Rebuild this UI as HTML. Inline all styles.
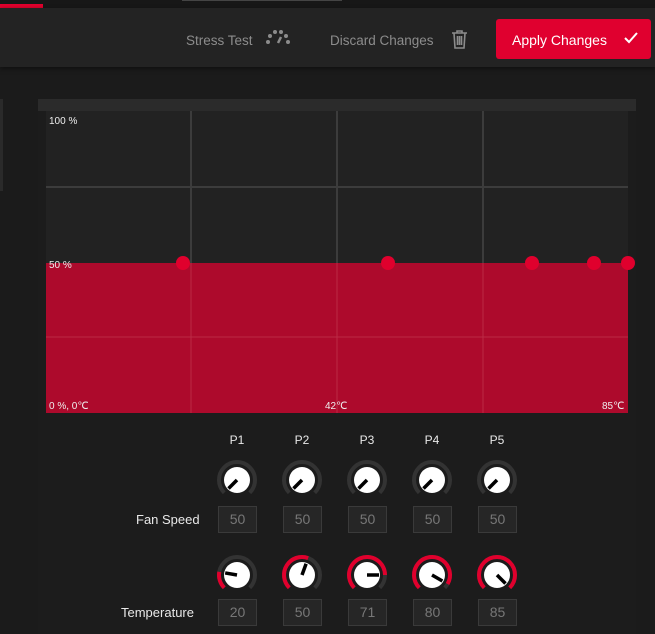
<!DOCTYPE html>
<html><head><meta charset="utf-8"><style>
*{margin:0;padding:0;box-sizing:border-box}
body{width:655px;height:634px;background:#1b1b1b;font-family:"Liberation Sans",sans-serif;position:relative;overflow:hidden}
.a{position:absolute}
.t{color:#8c8c8c;font-size:13.5px}
.box{position:absolute;width:39px;height:27px;border:1px solid #3a3a3a;background:#262626;color:#777;font-size:14px;text-align:center;line-height:25px}
.lbl{position:absolute;color:#e8e8e8;font-size:13px}
.p{position:absolute;color:#e8e8e8;font-size:12px;width:30px;text-align:center}
</style></head><body>
<div class="a" style="left:0;top:0;width:655px;height:8px;background:#171717"></div>
<div class="a" style="left:0;top:4px;width:43px;height:4px;background:#e0002d"></div>
<div class="a" style="left:182px;top:0;width:160px;height:1px;background:#444"></div>
<div class="a" style="left:0;top:8px;width:655px;height:59px;background:#232323;box-shadow:0 2px 4px #111"></div>
<div class="a t" style="left:186px;top:33px">Stress Test</div>
<svg class="a" style="left:264px;top:28px" width="28" height="20" viewBox="0 0 28 20">
<g fill="#8c8c8c"><circle cx="4" cy="14" r="2"/><circle cx="6" cy="8" r="2"/><circle cx="11" cy="4" r="2"/><circle cx="17" cy="4" r="2"/><circle cx="22" cy="8" r="2"/><circle cx="24" cy="14" r="2"/></g>
<line x1="14" y1="15" x2="17" y2="9" stroke="#8c8c8c" stroke-width="2.5"/></svg>
<div class="a t" style="left:330px;top:33px">Discard Changes</div>
<svg class="a" style="left:451px;top:29px" width="17" height="20" viewBox="0 0 17 20" fill="none" stroke="#8c8c8c" stroke-width="1.6">
<path d="M1 4h15M6 4V2h5v2M3 4l1 15h9l1-15M6.5 7v9M8.5 7v9M10.5 7v9"/></svg>
<div class="a" style="left:496px;top:19px;width:155px;height:40px;background:#e0002f;border-radius:3px"></div>
<div class="a" style="left:512px;top:32px;color:#fff;font-size:14px">Apply Changes</div>
<svg class="a" style="left:624px;top:32px" width="14" height="12" viewBox="0 0 14 12"><path d="M1 6l4 4 8-9" fill="none" stroke="#fff" stroke-width="2"/></svg>
<div class="a" style="left:0;top:99px;width:3px;height:92px;background:#2a2a2a"></div>
<div class="a" style="left:38px;top:99px;width:598px;height:535px;background:#1c1c1c"></div>
<div class="a" style="left:38px;top:99px;width:598px;height:12px;background:#2b2b2b"></div>
<svg class="a" style="left:46px;top:111px;overflow:visible" width="582" height="302">
<rect width="582" height="302" fill="#222"/>
<rect y="152" width="582" height="150" fill="#ad0a2c"/>
<g stroke="#3c3c3c" stroke-width="2"><line x1="145" y1="0" x2="145" y2="152"/><line x1="291" y1="0" x2="291" y2="152"/><line x1="437" y1="0" x2="437" y2="152"/><line x1="0" y1="76" x2="582" y2="76"/></g>
<g stroke="#bb2a45" stroke-width="1"><line x1="145" y1="152" x2="145" y2="302"/><line x1="291" y1="152" x2="291" y2="302"/><line x1="437" y1="152" x2="437" y2="302"/><line x1="0" y1="226" x2="582" y2="226"/></g>
<g fill="#e0002d"><circle cx="137" cy="152" r="7"/><circle cx="342" cy="152" r="7"/><circle cx="486" cy="152" r="7"/><circle cx="548" cy="152" r="7"/><circle cx="582" cy="152" r="7"/></g>
<g fill="#eee" font-size="10" font-family="Liberation Sans"><text x="3" y="13">100 %</text><text x="3" y="157">50 %</text><text x="3" y="298">0 %, 0℃</text><text x="279" y="298">42℃</text><text x="556" y="298">85℃</text></g>
</svg>
<div class="p" style="left:222px;top:433px">P1</div><div class="p" style="left:287px;top:433px">P2</div><div class="p" style="left:352px;top:433px">P3</div><div class="p" style="left:417px;top:433px">P4</div><div class="p" style="left:482px;top:433px">P5</div>
<div class="lbl" style="left:136px;top:512px">Fan Speed</div>
<div class="lbl" style="left:121px;top:605px">Temperature</div>
<div id="k"></div>
<script>
var xs=[237,302,367,432,497],h='';
function pt(r,b){b=b*Math.PI/180;return [r*Math.sin(b),-r*Math.cos(b)];}
function arc(r,a,b){var p=pt(r,a),q=pt(r,b),l=((b-a+720)%360)>180?1:0;return 'M'+p[0]+' '+p[1]+'A'+r+' '+r+' 0 '+l+' 1 '+q[0]+' '+q[1];}
function knob(cx,cy,bear,red){
var s='<svg class="a" style="left:'+(cx-22)+'px;top:'+(cy-22)+'px" width="44" height="44" viewBox="-22 -22 44 44">';
s+='<path d="'+arc(18,225,495)+'" fill="none" stroke="#333" stroke-width="4"/>';
if(red)s+='<path d="'+arc(18,225,bear)+'" fill="none" stroke="#e0002d" stroke-width="4"/>';
var e=pt(12,bear);
s+='<circle r="13" fill="#fff"/><line x1="0" y1="0" x2="'+e[0]+'" y2="'+e[1]+'" stroke="#000" stroke-width="3.5"/></svg>';
return s;}
var tb=[280,380,450,480,495],tv=[20,50,71,80,85];
for(var i=0;i<5;i++){
h+=knob(xs[i],480,225,false);
h+='<div class="box" style="left:'+(xs[i]-19)+'px;top:506px">50</div>';
h+=knob(xs[i],575,tb[i],true);
h+='<div class="box" style="left:'+(xs[i]-19)+'px;top:599px">'+tv[i]+'</div>';}
document.getElementById('k').innerHTML=h;
</script>
</body></html>
